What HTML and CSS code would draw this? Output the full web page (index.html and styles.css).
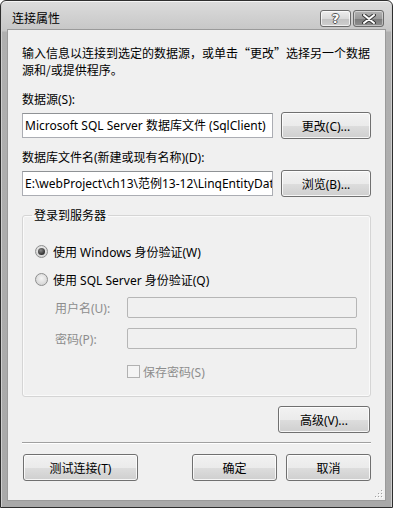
FILE: index.html
```html
<!DOCTYPE html>
<html>
<head>
    <title>连接属性</title>
    <link rel="stylesheet" href="styles.css">
</head>
<body>
    <div class="window">
        <div class="titlebar">
            <span class="title">连接属性</span>
            <div class="caption-buttons">
                <span class="cap-btn help">?</span>
                <span class="cap-btn close">
                    <svg width="14" height="10" viewBox="0 0 14 10">
                        <path d="M2 1 L12 9 M12 1 L2 9" stroke="#3a3a3a" stroke-width="4" stroke-linecap="round"/>
                        <path d="M2 1 L12 9 M12 1 L2 9" stroke="#fff" stroke-width="2" stroke-linecap="round"/>
                    </svg>
                </span>
            </div>
        </div>
        <div class="client">
            <p class="desc">输入信息以连接到选定的数据源，或单击“更改”选择另一个数据源和/或提供程序。</p>

            <div class="field-label first">数据源(S):</div>
            <div class="field-row">
                <div class="textbox">Microsoft SQL Server 数据库文件 (SqlClient)</div>
                <button class="btn side">更改(C)...</button>
            </div>

            <div class="field-label">数据库文件名(新建或现有名称)(D):</div>
            <div class="field-row">
                <div class="textbox">E:\webProject\ch13\范例13-12\LinqEntityData\App_Data\Database.mdf</div>
                <button class="btn side">浏览(B)...</button>
            </div>

            <fieldset class="group">
                <legend>登录到服务器</legend>
                <div class="radio-row">
                    <span class="radio checked"></span>
                    <span>使用 Windows 身份验证(W)</span>
                </div>
                <div class="radio-row second">
                    <span class="radio"></span>
                    <span>使用 SQL Server 身份验证(Q)</span>
                </div>
                <div class="cred-row">
                    <span class="cred-label">用户名(U):</span>
                    <div class="textbox disabled"></div>
                </div>
                <div class="cred-row pass">
                    <span class="cred-label">密码(P):</span>
                    <div class="textbox disabled"></div>
                </div>
                <div class="check-row">
                    <span class="checkbox"></span>
                    <span>保存密码(S)</span>
                </div>
            </fieldset>

            <div class="advanced-row">
                <button class="btn advanced">高级(V)...</button>
            </div>

            <div class="separator"></div>

            <div class="footer">
                <button class="btn test">测试连接(T)</button>
                <div class="footer-right">
                    <button class="btn ok">确定</button>
                    <button class="btn ok">取消</button>
                </div>
            </div>

            <svg class="grip" width="9" height="9" viewBox="0 0 9 9">
                <rect x="7" y="1" width="1" height="1" fill="#a0a0a0"/>
                <rect x="4" y="4" width="1" height="1" fill="#a0a0a0"/>
                <rect x="7" y="4" width="1" height="1" fill="#a0a0a0"/>
                <rect x="1" y="7" width="1" height="1" fill="#a0a0a0"/>
                <rect x="4" y="7" width="1" height="1" fill="#a0a0a0"/>
                <rect x="7" y="7" width="1" height="1" fill="#a0a0a0"/>
                <rect x="8" y="2" width="1" height="1" fill="#fff"/>
                <rect x="5" y="5" width="1" height="1" fill="#fff"/>
                <rect x="8" y="5" width="1" height="1" fill="#fff"/>
                <rect x="2" y="8" width="1" height="1" fill="#fff"/>
                <rect x="5" y="8" width="1" height="1" fill="#fff"/>
                <rect x="8" y="8" width="1" height="1" fill="#fff"/>
            </svg>
        </div>
    </div>
</body>
</html>
```

FILE: styles.css
```css
* {
    box-sizing: border-box;
}

body {
    margin: 0;
    font-family: "Noto Sans", "Noto Sans CJK SC", sans-serif;
    font-size: 12px;
    color: #000;
    background-color: #fff;
}

.window {
    width: 393px;
    height: 508px;
    border: 1px solid #2e2e2e;
    border-radius: 6px 6px 0 0;
    background: linear-gradient(to bottom, #dcdcdc 0, #c6c6c6 30px, #b0b0b0 31px, #a9a9a9 100%);
    padding: 0 7px 7px 7px;
    box-shadow: inset 0 1px 0 #f4f4f4, inset 1px 0 0 #cfcfcf, inset -1px 0 0 #cfcfcf;
}

.titlebar {
    height: 29px;
    display: flex;
    align-items: flex-start;
    justify-content: space-between;
}

.title {
    margin: 8px 0 0 4px;
    font-family: "Noto Sans CJK SC", sans-serif;
    font-size: 12px;
    line-height: 17px;
}

.caption-buttons {
    display: flex;
    gap: 2px;
    margin-top: 9px;
    margin-right: 1px;
}

.cap-btn {
    width: 31px;
    height: 17px;
    border: 1px solid #6b6b6b;
    border-radius: 3px;
    display: flex;
    align-items: center;
    justify-content: center;
}

.help {
    background: linear-gradient(to bottom, #eeeeee 0, #dadada 50%, #c2c2c2 51%, #cfcfcf 100%);
    box-shadow: inset 0 0 0 1px rgba(255, 255, 255, 0.7);
    font-family: "DejaVu Sans", sans-serif;
    font-size: 13px;
    font-weight: bold;
    color: #fff;
    line-height: 15px;
    text-shadow: 1px 0 0 #555, -1px 0 0 #555, 0 1px 0 #555, 0 -1px 0 #555;
}

.close {
    background: linear-gradient(to bottom, #b3b3b3 0, #9a9a9a 50%, #7a7a7a 51%, #8f8f8f 100%);
    box-shadow: inset 0 0 0 1px rgba(255, 255, 255, 0.45);
}

.client {
    position: relative;
    width: 377px;
    height: 470px;
    background-color: #f0f0f0;
    box-shadow: 0 0 0 1px #9a9a9a;
    padding: 14px 14px 0 14px;
}

.desc {
    margin: 0;
    font-family: "Noto Sans CJK SC", sans-serif;
    line-height: 17px;
}

.field-label {
    margin-top: 10px;
    line-height: 17px;
}

.field-label.first {
    margin-top: 13px;
}

.field-row {
    margin-top: 4px;
    display: flex;
    align-items: center;
    gap: 8px;
    height: 27px;
}

.textbox {
    flex: 1;
    min-width: 0;
    height: 25px;
    border: 1px solid #abadb3;
    border-top-color: #8f9295;
    background-color: #fff;
    padding: 0 2px;
    line-height: 23px;
    white-space: nowrap;
    overflow: hidden;
}

.textbox.disabled {
    height: 21px;
    background-color: #f0f0f0;
    border-color: #b6b6b6;
    border-radius: 2px;
}

.btn {
    font-family: "Noto Sans", "Noto Sans CJK SC", sans-serif;
    font-size: 12px;
    color: #000;
    height: 27px;
    padding: 0;
    border: 1px solid #707070;
    border-radius: 3px;
    background: linear-gradient(to bottom, #f2f2f2 0, #ebebeb 50%, #dddddd 51%, #cfcfcf 100%);
    box-shadow: inset 0 0 0 1px rgba(255, 255, 255, 0.8);
}

.btn.side {
    width: 90px;
    flex-shrink: 0;
}

.group {
    margin: 10px 0 0 0;
    padding: 19px 13px 16px 12px;
    border: 1px solid #d5d5d5;
    border-radius: 3px;
    box-shadow: inset 0 0 0 1px #fafafa;
}

.group legend {
    margin-left: -3px;
    padding: 0 2px;
    line-height: 17px;
}

.radio-row {
    display: flex;
    align-items: center;
    gap: 5px;
    height: 17px;
}

.radio-row.second {
    margin-top: 11px;
}

.radio {
    width: 13px;
    height: 13px;
    border-radius: 50%;
    border: 1px solid #8e8f8f;
    background: radial-gradient(circle at 50% 40%, #f4f4f4 0, #dcdcdc 60%, #c8c8c8 100%);
    position: relative;
}

.radio.checked::after {
    content: "";
    position: absolute;
    left: 2px;
    top: 2px;
    width: 7px;
    height: 7px;
    border-radius: 50%;
    background: radial-gradient(circle at 40% 35%, #8a8a8a 0, #2e2e2e 70%);
}

.cred-row {
    margin-top: 9px;
    display: flex;
    align-items: center;
    height: 21px;
    color: #8d8d8d;
}

.cred-row.pass {
    margin-top: 10px;
}

.cred-label {
    width: 92px;
    flex-shrink: 0;
    padding-left: 20px;
    white-space: nowrap;
}

.check-row {
    margin-top: 14px;
    margin-left: 92px;
    display: flex;
    align-items: center;
    gap: 3px;
    height: 17px;
    color: #8d8d8d;
}

.checkbox {
    width: 13px;
    height: 13px;
    border: 1px solid #b1b1b1;
    background-color: #f4f4f4;
}

.advanced-row {
    margin-top: 9px;
    display: flex;
    justify-content: flex-end;
}

.btn.advanced {
    width: 92px;
    margin-right: 1px;
}

.separator {
    margin-top: 9px;
    height: 2px;
    border-top: 1px solid #a0a0a0;
    border-bottom: 1px solid #fff;
}

.footer {
    margin-top: 10px;
    display: flex;
    justify-content: space-between;
}

.btn.test {
    width: 115px;
    margin-left: 1px;
}

.footer-right {
    display: flex;
    gap: 9px;
}

.btn.ok {
    width: 85px;
}

.grip {
    position: absolute;
    right: 2px;
    bottom: 2px;
}
```
